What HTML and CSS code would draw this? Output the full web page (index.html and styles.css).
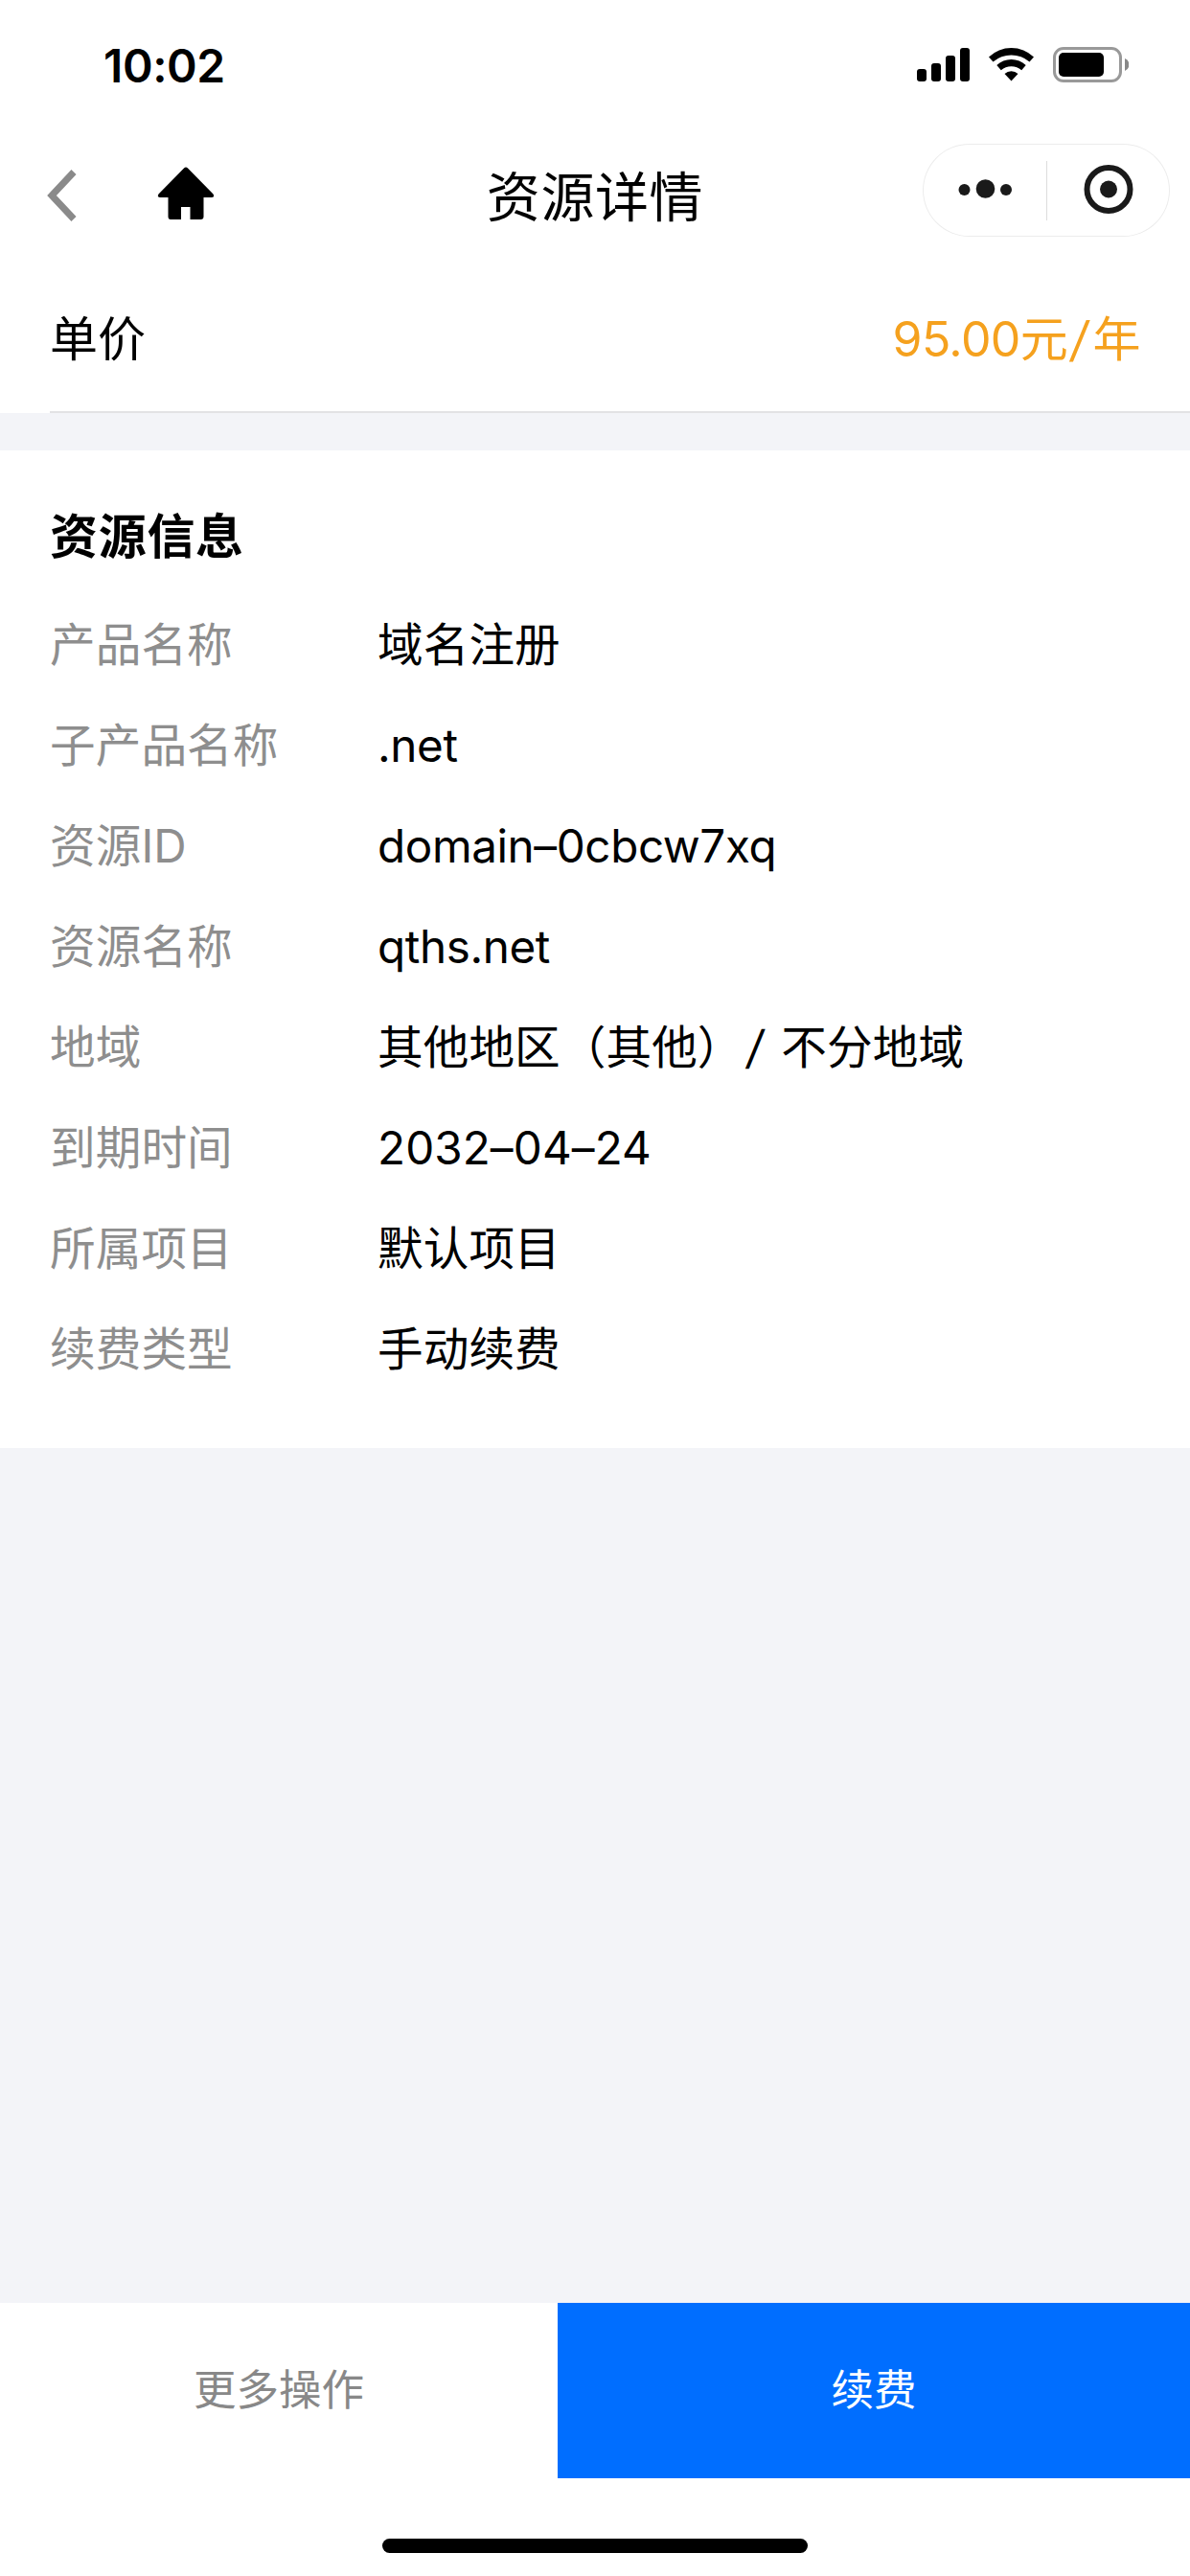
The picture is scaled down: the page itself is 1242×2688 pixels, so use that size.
FILE: index.html
```html
<!DOCTYPE html>
<html lang="zh-CN">
<head>
    <meta charset="UTF-8">
    <meta name="viewport" content="width=device-width, initial-scale=1.0">
    <title>资源详情</title>
    <link rel="stylesheet" href="styles.css">
</head>
<body>
    <div class="page">
        <div class="status-bar">
            <span class="time">10:02</span>
            <svg class="status-icons" width="222" height="38" viewBox="0 0 222 38">
                <rect x="1" y="23" width="10" height="13" rx="3"/>
                <rect x="16" y="17" width="10" height="19" rx="3"/>
                <rect x="31" y="9" width="10" height="27" rx="3"/>
                <rect x="46" y="1" width="10" height="35" rx="3"/>
                <path d="M76 10.500 A34 34 0 0 1 123 10.500 L118.500 15.500 A29 29 0 0 0 80.500 15.500 Z"/>
                <path d="M84.300 19 A22 22 0 0 1 114.700 19 L110.200 24.200 A16.500 16.500 0 0 0 88.800 24.200 Z"/>
                <path d="M92.500 28 A10.500 10.500 0 0 1 106.500 28 L99.500 35.500 Z"/>
                <rect x="144.500" y="1.500" width="69" height="34" rx="9.500" fill="none" stroke="#999" stroke-width="3"/>
                <rect x="149" y="6" width="47" height="25" rx="5"/>
                <path d="M218 12 A7 7 0 0 1 218 25 Z" fill="#888"/>
            </svg>
        </div>

        <div class="nav">
            <div class="nav-left">
                <svg class="back" width="32" height="54" viewBox="0 0 32 54">
                    <path d="M29 2.500 L6 27 L29 51.500" fill="none" stroke="#8a8a8a" stroke-width="7"/>
                </svg>
                <svg class="home" width="60" height="56" viewBox="0 0 60 56">
                    <path d="M28 1.500 Q30 -0.500 32 1.500 L58.500 28.500 Q60.500 32 57 32 L48.500 32 L48.500 52 Q48.500 55 45.500 55 L34.500 55 L34.500 42 L25 42 L25 55 L14 55 Q11.500 55 11.500 52 L11.500 32 L3 32 Q-0.500 32 1.500 28.500 Z"/>
                </svg>
            </div>
            <h1>资源详情</h1>
            <div class="capsule">
                <svg width="258" height="96" viewBox="0 0 258 96">
                    <circle cx="43.500" cy="48" r="6"/>
                    <circle cx="65.500" cy="47" r="9.800"/>
                    <circle cx="87" cy="48" r="6"/>
                    <rect x="129" y="18" width="1" height="62" fill="#ddd"/>
                    <circle cx="194" cy="47.500" r="22.500" fill="none" stroke="#1a1a1a" stroke-width="6"/>
                    <circle cx="194" cy="47.500" r="9"/>
                </svg>
            </div>
        </div>

        <div class="price-row">
            <span>单价</span>
            <span class="price">95.00元<span class="slash">/</span>年</span>
        </div>

        <div class="info">
            <h2>资源信息</h2>
            <div class="row"><span class="label">产品名称</span><span class="value">域名注册</span></div>
            <div class="row"><span class="label">子产品名称</span><span class="value latin">.net</span></div>
            <div class="row"><span class="label">资源ID</span><span class="value latin">domain–0cbcw7xq</span></div>
            <div class="row"><span class="label">资源名称</span><span class="value latin">qths.net</span></div>
            <div class="row"><span class="label">地域</span><span class="value">其他地区（其他）<span class="slash">/</span> 不分地域</span></div>
            <div class="row"><span class="label">到期时间</span><span class="value">2032–04–24</span></div>
            <div class="row"><span class="label">所属项目</span><span class="value">默认项目</span></div>
            <div class="row"><span class="label">续费类型</span><span class="value">手动续费</span></div>
        </div>

        <div class="footer">
            <div class="buttons">
                <div class="more">更多操作</div>
                <div class="renew">续费</div>
            </div>
            <div class="home-bar"></div>
        </div>
    </div>
</body>
</html>
```
FILE: styles.css
```css
*{
    margin: 0px;
    padding: 0px;
    box-sizing: border-box;
}

body{
    font-family: Inter, "Noto Sans CJK SC", sans-serif;
    color: #000;
    background-color: #f3f4f8;
}

.page{
    width: 1242px;
    height: 2688px;
    display: flex;
    flex-direction: column;
}

.status-bar{
    height: 136px;
    padding: 0 64px 0 108px;
    background-color: white;
    display: flex;
    justify-content: space-between;
    align-items: center;
}

.time{
    font-size: 48px;
    font-weight: 600;
    letter-spacing: -0.4px;
}

.nav{
    height: 142px;
    padding: 0 21px 0 48px;
    background-color: white;
    display: flex;
    justify-content: space-between;
}

.nav-left{
    width: 231px;
    padding-top: 38px;
    display: flex;
    gap: 84px;
}

.back{
    margin-top: 3px;
}

h1{
    font-size: 56px;
    font-weight: 400;
    line-height: 140px;
    letter-spacing: 0.6px;
}

.capsule{
    width: 258px;
    height: 97px;
    margin-top: 14px;
    border-radius: 49px;
    box-shadow: inset 0 0 0 1px #ececec;
    fill: #1a1a1a;
}

.price-row{
    height: 153px;
    padding-right: 52px;
    background-color: white;
    border-left: 52px solid white;
    box-shadow: inset 0 -2px #e2e2e4;
    font-size: 50px;
    line-height: 153px;
    display: flex;
    justify-content: space-between;
}

.price{
    color: #f5a11e;
    letter-spacing: -0.6px;
}

/* wider slant than the font's own slash */
.slash{
    display: inline-block;
    margin: 0 5px 0 4px;
    transform: skewX(-8deg);
}

.info{
    height: 1041px;
    margin-top: 39px;
    padding: 38px 52px 0;
    background-color: white;
}

h2{
    font-size: 50px;
    font-weight: 700;
    line-height: 104px;
    letter-spacing: 0.7px;
    margin-bottom: 8px;
}

.row{
    height: 105px;
    line-height: 105px;
    font-size: 47.6px;
    letter-spacing: 0.1px;
    display: flex;
}

.label{
    width: 342px;
    color: #8e8e8e;
}

.latin{
    letter-spacing: -0.4px;
}

.footer{
    height: 285px;
    margin-top: auto;
    background-color: white;
}

.buttons{
    height: 183px;
    display: flex;
    font-size: 44.5px;
    line-height: 183px;
    text-align: center;
}

.more{
    width: 582px;
    color: #888;
}

.renew{
    flex: 1;
    color: white;
    background-color: #006eff;
}

.home-bar{
    width: 444px;
    height: 15px;
    margin: 63px auto 0;
    border-radius: 8px;
    background-color: black;
}
```
